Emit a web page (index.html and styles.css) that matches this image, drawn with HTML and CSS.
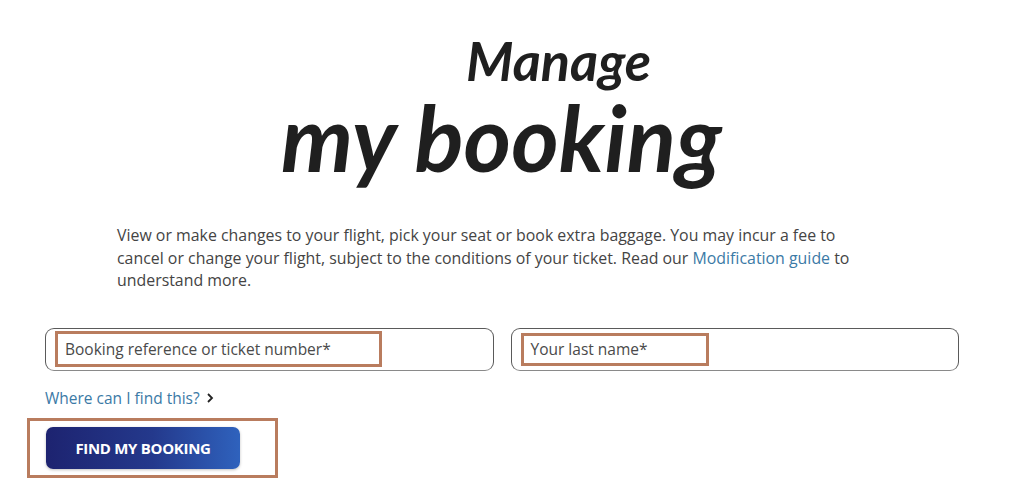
FILE: index.html
```html
<!DOCTYPE html>
<html lang="en">
<head>
    <meta charset="UTF-8">
    <meta name="viewport" content="width=device-width, initial-scale=1.0">
    <title>Manage my booking</title>
    <link rel="stylesheet" href="styles.css">
</head>
<body>
    <main class="page">
        <!-- Heading -->
        <h1 class="main-heading">
            <span class="heading-top">Manage</span>
            <span class="heading-bottom">my booking</span>
        </h1>

        <p class="intro">
            View or make changes to your flight, pick your seat or book extra baggage. You may incur a fee to
            cancel or change your flight, subject to the conditions of your ticket. Read our
            <a href="#" class="link">Modification guide</a> to understand more.
        </p>

        <!-- Search form -->
        <form class="search-form" onsubmit="return false">
            <div class="fields">
                <label class="field">
                    <span class="field-label mark">Booking reference or ticket number*</span>
                </label>
                <label class="field">
                    <span class="field-label mark mark-short">Your last name*</span>
                </label>
            </div>

            <a href="#" class="link help-link">Where can I find this?
                <svg class="chevron" width="8" height="12" viewBox="0 0 8 12">
                    <path d="M2 2 L6 6 L2 10" fill="none" stroke="#222" stroke-width="1.8"/>
                </svg>
            </a>

            <div class="btn-wrap mark">
                <button class="btn">FIND MY BOOKING</button>
            </div>
        </form>
    </main>
</body>
</html>
```

FILE: styles.css
```css
*{
    box-sizing: border-box;
}
body{
    margin: 0;
    background-color: #ffffff;
    font-family: "Open Sans", "Noto Sans", sans-serif;
    color: #444444;
}
.page{
    padding: 30px 65px 0 45px;
}
.main-heading{
    margin: 0;
    font-family: Lato, sans-serif;
    font-style: italic;
    font-weight: 700;
    color: #1f1f1f;
}
.heading-top{
    display: block;
    padding-left: 421px;
    font-size: 54px;
    line-height: 62px;
}
.heading-bottom{
    display: block;
    padding-left: 236px;
    font-size: 91px;
    line-height: 90px;
}
.intro{
    margin: 42px 0 0 72px;
    width: 760px;
    font-size: 15.9px;
    line-height: 22.5px;
}
.link{
    color: #3b7aa6;
    text-decoration: none;
}
.search-form{
    margin-top: 36px;
}
.fields{
    display: flex;
    gap: 17px;
}
.field{
    flex: 1;
    height: 43px;
    border: 1px solid #5a5a5a;
    border-bottom-color: #8a8a8a;
    border-radius: 9px;
    padding: 3px 9px;
    display: flex;
    align-items: center;
}
.mark{
    border: 3px solid #b97c5e;
}
.field-label{
    width: 327px;
    height: 36px;
    padding-left: 7px;
    display: flex;
    align-items: center;
    font-size: 15.5px;
    color: #4a4a4a;
}
.mark-short{
    width: 188px;
    height: 33px;
}
.help-link{
    display: inline-flex;
    align-items: center;
    gap: 6px;
    margin-top: 16px;
    font-size: 15.5px;
}
.btn-wrap{
    width: 251px;
    height: 60px;
    margin: 9px 0 0 -18px;
    padding: 6px 0 0 16px;
}
.btn{
    width: 194px;
    height: 42px;
    border: none;
    outline: none;
    border-radius: 7px;
    background: linear-gradient(90deg, #1d2370 0%, #24398c 55%, #2f62bd 100%);
    color: #ffffff;
    font-family: "Open Sans", sans-serif;
    font-weight: 700;
    font-size: 15px;
    letter-spacing: -0.3px;
    box-shadow: 0 1px 3px rgba(0,0,0,0.25);
}
```
